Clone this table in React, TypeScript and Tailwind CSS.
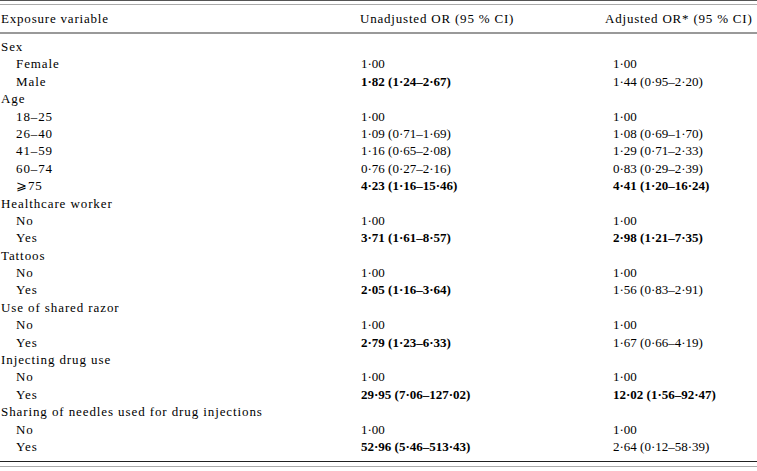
import React from 'react';

type Row = {
  label: string;
  sub?: boolean;
  unadj?: string;
  adj?: string;
  unadjBold?: boolean;
  adjBold?: boolean;
};

const ROWS: Row[] = [
  { label: 'Sex' },
  { label: 'Female', sub: true, unadj: '1·00', adj: '1·00' },
  { label: 'Male', sub: true, unadj: '1·82 (1·24–2·67)', adj: '1·44 (0·95–2·20)', unadjBold: true },
  { label: 'Age' },
  { label: '18–25', sub: true, unadj: '1·00', adj: '1·00' },
  { label: '26–40', sub: true, unadj: '1·09 (0·71–1·69)', adj: '1·08 (0·69–1·70)' },
  { label: '41–59', sub: true, unadj: '1·16 (0·65–2·08)', adj: '1·29 (0·71–2·33)' },
  { label: '60–74', sub: true, unadj: '0·76 (0·27–2·16)', adj: '0·83 (0·29–2·39)' },
  { label: '⩾75', sub: true, unadj: '4·23 (1·16–15·46)', adj: '4·41 (1·20–16·24)', unadjBold: true, adjBold: true },
  { label: 'Healthcare worker' },
  { label: 'No', sub: true, unadj: '1·00', adj: '1·00' },
  { label: 'Yes', sub: true, unadj: '3·71 (1·61–8·57)', adj: '2·98 (1·21–7·35)', unadjBold: true, adjBold: true },
  { label: 'Tattoos' },
  { label: 'No', sub: true, unadj: '1·00', adj: '1·00' },
  { label: 'Yes', sub: true, unadj: '2·05 (1·16–3·64)', adj: '1·56 (0·83–2·91)', unadjBold: true },
  { label: 'Use of shared razor' },
  { label: 'No', sub: true, unadj: '1·00', adj: '1·00' },
  { label: 'Yes', sub: true, unadj: '2·79 (1·23–6·33)', adj: '1·67 (0·66–4·19)', unadjBold: true },
  { label: 'Injecting drug use' },
  { label: 'No', sub: true, unadj: '1·00', adj: '1·00' },
  { label: 'Yes', sub: true, unadj: '29·95 (7·06–127·02)', adj: '12·02 (1·56–92·47)', unadjBold: true, adjBold: true },
  { label: 'Sharing of needles used for drug injections' },
  { label: 'No', sub: true, unadj: '1·00', adj: '1·00' },
  { label: 'Yes', sub: true, unadj: '52·96 (5·46–513·43)', adj: '2·64 (0·12–58·39)', unadjBold: true },
];

export default function App() {
  const renderRow = (row: Row, i: number) => (
    <div key={i} className="flex h-[17.4px] leading-[17.4px] whitespace-nowrap">
      <div className={`w-[361px] tracking-[0.9px] ${row.sub ? 'pl-[16px]' : 'pl-[1px]'}`}>{row.label}</div>
      <div className={`w-[252px] ${row.unadjBold ? 'font-bold' : ''}`}>{row.unadj}</div>
      <div className={`flex-1 ${row.adjBold ? 'font-bold' : ''}`}>{row.adj}</div>
    </div>
  );

  return (
    <div className="w-[757px] h-[471px] bg-white text-black text-[13px] font-['Liberation_Serif','DejaVu_Serif',serif] overflow-hidden">
      <div className="h-px bg-[#555]" />
      <div className="h-[3px]" />
      <div className="h-px bg-[#aaa]" />
      <div className="flex h-[17.3px] leading-[17.3px] mt-[5px] whitespace-nowrap tracking-[0.8px]">
        <div className="w-[360px] pl-[1px]">Exposure variable</div>
        <div className="w-[245px]">Unadjusted OR (95 % CI)</div>
        <div className="flex-1">Adjusted OR* (95 % CI)</div>
      </div>
      <div className="h-[4.7px]" />
      <div className="h-[2px] bg-[#999]" />
      <div className="h-[4px]" />
      {ROWS.map(renderRow)}
      <div className="h-[6px]" />
      <div className="h-px bg-[#222]" />
      <div className="h-[4px]" />
      <div className="h-px bg-[#aaa]" />
    </div>
  );
}
